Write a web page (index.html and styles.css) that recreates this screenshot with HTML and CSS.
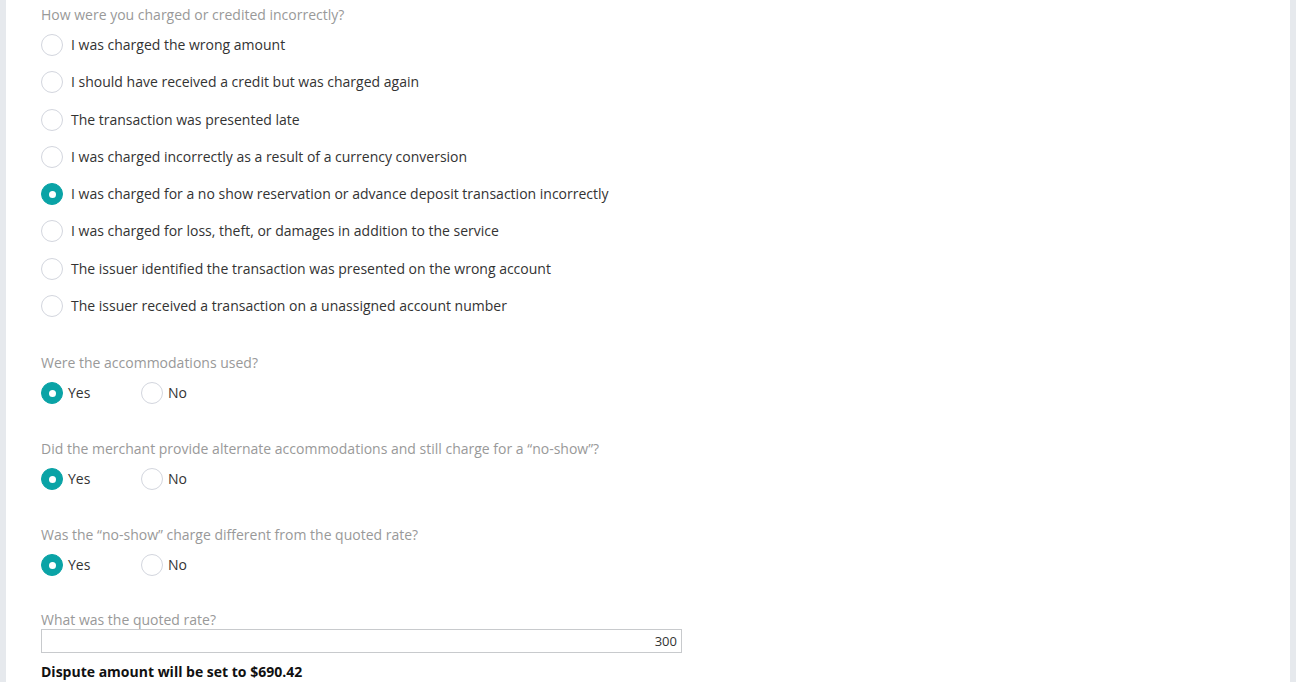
FILE: index.html
```html
<!DOCTYPE html>
<html>
<head>
<meta charset="utf-8">
<link rel="stylesheet" href="styles.css">
</head>
<body>
<div class="panel">
  <div class="q first">
    <div class="label">How were you charged or credited incorrectly?</div>
    <div class="list">
      <div class="opt"><span class="radio"></span><span class="txt">I was charged the wrong amount</span></div>
      <div class="opt"><span class="radio"></span><span class="txt">I should have received a credit but was charged again</span></div>
      <div class="opt"><span class="radio"></span><span class="txt">The transaction was presented late</span></div>
      <div class="opt"><span class="radio"></span><span class="txt">I was charged incorrectly as a result of a currency conversion</span></div>
      <div class="opt"><span class="radio on"></span><span class="txt">I was charged for a no show reservation or advance deposit transaction incorrectly</span></div>
      <div class="opt"><span class="radio"></span><span class="txt">I was charged for loss, theft, or damages in addition to the service</span></div>
      <div class="opt"><span class="radio"></span><span class="txt">The issuer identified the transaction was presented on the wrong account</span></div>
      <div class="opt"><span class="radio"></span><span class="txt">The issuer received a transaction on a unassigned account number</span></div>
    </div>
  </div>

  <div class="q">
    <div class="label">Were the accommodations used?</div>
    <div class="yn">
      <div class="opt yno"><span class="radio on"></span><span class="txt">Yes</span></div>
      <div class="opt yno"><span class="radio"></span><span class="txt">No</span></div>
    </div>
  </div>

  <div class="q">
    <div class="label">Did the merchant provide alternate accommodations and still charge for a “no-show”?</div>
    <div class="yn">
      <div class="opt yno"><span class="radio on"></span><span class="txt">Yes</span></div>
      <div class="opt yno"><span class="radio"></span><span class="txt">No</span></div>
    </div>
  </div>

  <div class="q pre-last">
    <div class="label">Was the “no-show” charge different from the quoted rate?</div>
    <div class="yn">
      <div class="opt yno"><span class="radio on"></span><span class="txt">Yes</span></div>
      <div class="opt yno"><span class="radio"></span><span class="txt">No</span></div>
    </div>
  </div>

  <div class="q last">
    <div class="label">What was the quoted rate?</div>
    <div class="input">300</div>
    <div class="result">Dispute amount will be set to $690.42</div>
  </div>
</div>
</body>
</html>
```

FILE: styles.css
```css
html, body {
  margin: 0;
  padding: 0;
  background: #e6e9ed;
  height: 100%;
  overflow: hidden;
}
body {
  font-family: "Open Sans", "Liberation Sans", sans-serif;
  font-size: 14px;
  color: #333;
}
.panel {
  margin: 0 6px;
  background: #fff;
  padding: 5px 35px 40px;
  min-height: 100%;
}
.q {
  margin-bottom: 35px;
}
.q.first {
  margin-bottom: 36px;
}
.q.pre-last {
  margin-bottom: 34px;
}
.label {
  color: #999;
  line-height: 20px;
  height: 20px;
}
.list {
  display: flex;
  flex-direction: column;
  gap: 15.3px;
  margin-top: 9px;
}
.opt {
  display: flex;
  align-items: center;
  height: 22px;
}
.radio {
  width: 20px;
  height: 20px;
  border: 1px solid #d3d6de;
  border-radius: 50%;
  box-sizing: content-box;
  flex: none;
  margin-right: 8px;
  background: #fff;
  position: relative;
}
.radio.on {
  background: #0aa3a6;
  border-color: #0aa3a6;
}
.radio.on::after {
  content: "";
  position: absolute;
  left: 6.5px;
  top: 6.5px;
  width: 7px;
  height: 7px;
  border-radius: 50%;
  background: #fff;
}
.txt {
  line-height: 20px;
}
.yn {
  display: flex;
  margin-top: 9px;
}
.yno {
  width: 100px;
}
.yno .radio {
  margin-right: 5px;
}
.input {
  width: 635px;
  height: 22px;
  border: 1px solid #c8cacd;
  text-align: right;
  padding-right: 4px;
  box-sizing: content-box;
  line-height: 22px;
  font-size: 13px;
  margin-top: -1px;
}
.result {
  font-weight: bold;
  line-height: 20px;
  margin-top: 9px;
  color: #111;
}
```
